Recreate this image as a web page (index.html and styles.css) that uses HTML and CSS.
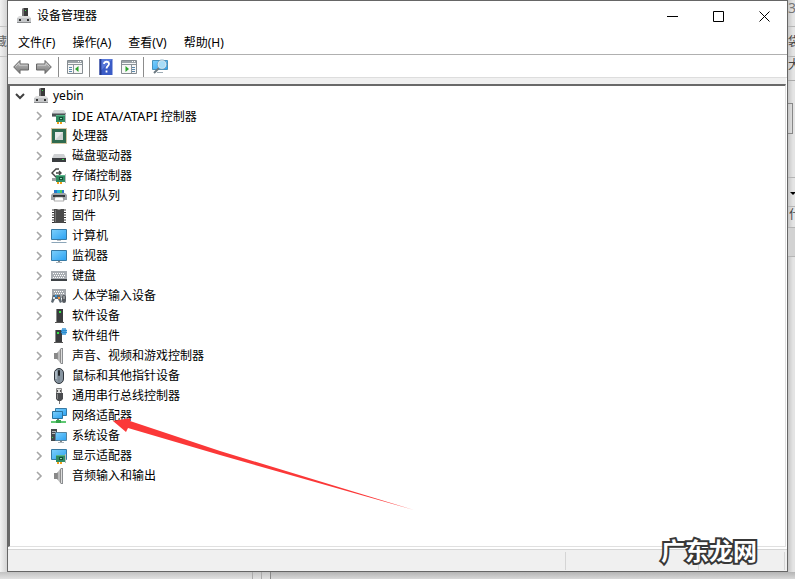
FILE: index.html
```html
<!DOCTYPE html>
<html lang="zh-CN">
<head>
<meta charset="utf-8">
<title>设备管理器</title>
<link rel="stylesheet" href="styles.css">
</head>
<body>
<svg class="defs" width="0" height="0" aria-hidden="true">
  <defs>
    <linearGradient id="screen" x1="0" y1="0" x2="1" y2="1"><stop offset="0" stop-color="#7dd0fb"/><stop offset="1" stop-color="#2ba1f2"/></linearGradient>
    <linearGradient id="arrow" x1="0" y1="0" x2="0" y2="1"><stop offset="0" stop-color="#c4c4c4"/><stop offset="1" stop-color="#777"/></linearGradient>
    <linearGradient id="cone" x1="0" y1="0" x2="1" y2="0"><stop offset="0" stop-color="#777"/><stop offset=".5" stop-color="#d0d0d0"/><stop offset="1" stop-color="#777"/></linearGradient>
  </defs>
  <symbol id="i-root" viewBox="0 0 16 16">
    <path d="M6 1l1-1h4v9H6z" fill="#777"/><path d="M8 0h4v9H8z" fill="#3a3a3a"/><path d="M9 2h1v1H9z" fill="#3bdc4a"/>
    <path d="M3 8h10l2 2H1z" fill="#ddd"/><path d="M1 10h14v5H1z" fill="#c4c6c8"/><path d="M1 14h14v1H1z" fill="#8c8e90"/><path d="M3 11h2v2H3zM11 11h2v2h-2z" fill="#333"/>
  </symbol>
  <symbol id="i-card" viewBox="0 0 16 16">
    <path d="M5 7h9v7H5z" fill="#2f8c62"/><path d="M5 7h9v1H5z" fill="#58b68a"/><path d="M14 6h1v9h-1z" fill="#b8bcc0"/><path d="M8 9h4v3H8z" fill="#164d38"/><path d="M9 10h2v1H9z" fill="#8ad8b0"/><path d="M6 14h2v2H6zM9 14h2v2H9z" fill="#f2a11c"/>
  </symbol>
  <symbol id="i-ide" viewBox="0 0 16 16">
    <path d="M3 2h10l2 3H1z" fill="#d4d7d9"/><path d="M1 5h14v4H1z" fill="#8f9599"/><path d="M1 6h14v2H1z" fill="#4c5154"/><use href="#i-card" width="16" height="16"/>
  </symbol>
  <symbol id="i-cpu" viewBox="0 0 16 16">
    <rect x=".5" y=".5" width="15" height="15" fill="none" stroke="#a68d45" stroke-dasharray="1 1"/><path d="M1 1h14v14H1z" fill="#2f6b4f"/><path d="M4 4h8v8H4z" fill="#cfd2d1"/><path d="M4 4h8L4 12z" fill="#e9e9e9"/>
  </symbol>
  <symbol id="i-disk" viewBox="0 0 16 16">
    <path d="M3 6h10l2 4H1z" fill="#cfd1d3"/><path d="M1 10h14v4H1z" fill="#3a3d40"/><path d="M11 11h2v1h-2z" fill="#35d74b"/>
  </symbol>
  <symbol id="i-storage" viewBox="0 0 16 16">
    <path d="M8 1H5L1 5l4 4h2M5 5h5M8 3l2 2-2 2" fill="none" stroke="#444" stroke-width="1.4"/><path d="M1 10h5v3H1z" fill="#9b9ea0"/><use href="#i-card" width="16" height="16"/>
  </symbol>
  <symbol id="i-printer" viewBox="0 0 16 16">
    <path d="M3 2h10v4H3z" fill="#2878cc"/><path d="M6 2h3v3H6z" fill="#22b9d2"/><path d="M9 2h2v3H9z" fill="#4bc653"/><path d="M2 5h12l2 2v5H0V7z" fill="#9fa4a8"/><path d="M2 7h12v2H2z" fill="#34383b"/><path d="M4 9h8l1 4H3z" fill="#fff" stroke="#777" stroke-width=".6"/>
  </symbol>
  <symbol id="i-chip" viewBox="0 0 16 16">
    <path d="M1 2h14M1 4.500h14M1 7h14M1 9.500h14M1 12h14M1 14.500h14" stroke="#333"/><path d="M3 1h3l1 1h2l1-1h3v14H3z" fill="#4a4a4a"/><path d="M4 2h1v12H4z" fill="#777"/>
  </symbol>
  <symbol id="i-computer" viewBox="0 0 16 16">
    <path d="M.5 1.500h15v10H.5z" fill="url(#screen)" stroke="#377aa5"/><path d="M6 12h4v1H6z" fill="#b6bec4"/><path d="M1 14h14l1 1H0z" fill="#8ca6b9"/>
  </symbol>
  <symbol id="i-monitor" viewBox="0 0 16 16">
    <path d="M.5 2.500h15v10H.5z" fill="url(#screen)" stroke="#377aa5"/><path d="M7 13h2v1H7z" fill="#888"/><path d="M5 14h6v1H5z" fill="#a8b4bc"/>
  </symbol>
  <symbol id="i-keyboard" viewBox="0 0 16 16">
    <path d="M0 3h16v9H0z" fill="#a9adb2"/><path d="M0 11h16v2H0z" fill="#3e4246"/><path d="M2 5.500h12M3 7.500h11M2 9.500h12" stroke="#fff" stroke-dasharray="1 1"/>
  </symbol>
  <symbol id="i-hid" viewBox="0 0 16 16">
    <path d="M1 1h14v9H1z" fill="#a4a8ad"/><path d="M3 3.500h10M4 5.500h10" stroke="#fff" stroke-dasharray="1 1"/><path d="M2 7h7l2 7-2 1-2-4H4l-2 4-2-1z" fill="#5c6770"/><path d="M2 9h2v2H2z" fill="#d5e5f2"/><path d="M4 7h2v2H4z" fill="#3594dc"/><path d="M7 9h2v2H7z" fill="#ee8f3e"/><rect x="11" y="7" width="4" height="8" rx="2" fill="#555a60"/><path d="M13 8v3" stroke="#ccc"/>
  </symbol>
  <symbol id="i-soft" viewBox="0 0 16 16">
    <path d="M5 1h7v13H5z" fill="#3a3c3e"/><path d="M5 1h1v13H5z" fill="#888"/><path d="M8 3h2v2H8z" fill="#35e445"/><path d="M4 14h9v1H4z" fill="#555"/>
  </symbol>
  <symbol id="i-component" viewBox="0 0 16 16">
    <path d="M4 2h7v12H4z" fill="#3a3c3e"/><path d="M4 2h1v12H4z" fill="#888"/><path d="M6 4h2v2H6z" fill="#35e445"/><path d="M3 14h9v1H3z" fill="#555"/><path d="M12 0v7M14 0v7M10 2.500h6M10 4.500h6" fill="none" stroke="#2a8ed2" stroke-width="1.400"/>
  </symbol>
  <symbol id="i-speaker" viewBox="0 0 16 16">
    <path d="M3 5h3v6H3z" fill="#888"/><path d="M6 5l4-5v16l-4-5z" fill="url(#cone)"/><path d="M10 0h2v16h-2z" fill="#8b8e91"/><path d="M10.500 1v14" stroke="#ddd"/>
  </symbol>
  <symbol id="i-mouse" viewBox="0 0 16 16">
    <rect x="3.500" y=".5" width="9" height="15" rx="4.500" fill="#8795a1" stroke="#30363c"/><path d="M5 3v8" stroke="#ced9e1"/><rect x="7" y="2" width="2" height="6" rx="1" fill="#22272b"/><path d="M8 8v6" stroke="#65717b" stroke-width=".6"/>
  </symbol>
  <symbol id="i-usb" viewBox="0 0 16 16">
    <path d="M5.500.5h5v5h-5z" fill="#ddd" stroke="#888"/><path d="M6 2h1v2H6zM9 2h1v2H9z" fill="#555"/><path d="M5 5h7v6l-2 2H7l-2-2z" fill="#4a4c4f"/><path d="M6 6h1v5H6z" fill="#888"/><path d="M8 13h1v3H8z" fill="#777"/>
  </symbol>
  <symbol id="i-network" viewBox="0 0 16 16">
    <path d="M4.500.5h11v7h-11z" fill="url(#screen)" stroke="#377aa5"/><path d="M1.500 3.500h10v7h-10z" fill="url(#screen)" stroke="#28729e"/><path d="M6 11h2v2H6z" fill="#777"/><path d="M0 13h15v2H0z" fill="#5fc873"/><path d="M5 12h5v3H5z" fill="#35a54a"/>
  </symbol>
  <symbol id="i-system" viewBox="0 0 16 16">
    <path d="M0 1h6v12H0z" fill="#45494c"/><path d="M1 3.500h4M1 5.500h4" stroke="#b4b8bb"/><path d="M1 9h1v1H1z" fill="#3de34d"/><path d="M4.500 4.500h11v8h-11z" fill="url(#screen)" stroke="#55839f"/><path d="M9 13h2v1H9z" fill="#888"/><path d="M7 14h6v1H7z" fill="#a7b2b9"/>
  </symbol>
  <symbol id="i-display" viewBox="0 0 16 16">
    <path d="M.5 1.500h15v10H.5z" fill="url(#screen)" stroke="#377aa5"/><use href="#i-card" width="16" height="16"/>
  </symbol>
  <symbol id="i-back" viewBox="0 0 16 14">
    <path d="M.7 7L7 .5v3.500h8.500v6H7v3.500z" fill="url(#arrow)" stroke="#666"/><path d="M2.500 6.500L6 3v2.200h8.500" fill="none" stroke="#d6d6d6" stroke-width=".8"/>
  </symbol>
  <symbol id="i-panel" viewBox="0 0 16 14">
    <path d="M.5.5h15v13H.5z" fill="#f7f7f7" stroke="#858c91"/><path d="M1 1h14v2H1z" fill="#9ba3a8"/><path d="M11 1h1v1h-1zM13 1h1v1h-1z" fill="#fff"/><path d="M1 4.500h14M6.500 5v8" stroke="#8c9499"/><path d="M2 7.500h3M2 9.500h3M2 11.500h3" stroke="#5a88ab"/><path d="M11.500 6v6L8 9z" fill="#2ba42b"/>
  </symbol>
  <symbol id="i-panel-right" viewBox="0 0 16 14">
    <path d="M.5.5h15v13H.5z" fill="#f7f7f7" stroke="#858c91"/><path d="M1 1h14v2H1z" fill="#9ba3a8"/><path d="M11 1h1v1h-1zM13 1h1v1h-1z" fill="#fff"/><path d="M1 4.500h14M10.500 5v8" stroke="#8c9499"/><path d="M11 7.500h3M11 9.500h3M11 11.500h3" stroke="#5a88ab"/><path d="M4.500 6v6L8 9z" fill="#2ba42b"/>
  </symbol>
  <symbol id="i-help" viewBox="0 0 13 16">
    <path d="M0 0h13v16H0z" fill="#3a5bc6"/><path d="M0 0h2v16H0z" fill="#24398c"/><path d="M2 0h11L2 11z" fill="#5878d9"/><path d="M4.500 5c0-3 5-3 5 0 0 2-2.500 2-2.500 4.500M7 11.500v2" fill="none" stroke="#fff" stroke-width="1.800"/>
  </symbol>
  <symbol id="i-scan" viewBox="0 0 16 16">
    <path d="M.5 1.500h15v9H.5z" fill="url(#screen)" stroke="#4792bd"/><path d="M5 13h6v1H5z" fill="#9dabb4"/><path d="M7 9l-5 5" stroke="#6c7981" stroke-width="2"/><circle cx="10" cy="5.500" r="4" fill="#a8ddf8" stroke="#dceaf2" stroke-width="1.200"/><circle cx="10" cy="5.500" r="4.700" fill="none" stroke="#6795b2" stroke-width=".6"/>
  </symbol>
</svg>

<div class="desktop">
  <div class="behind behind-left" aria-hidden="true"><span class="peek">收藏</span></div>

  <main class="window">
    <header class="titlebar">
      <svg class="icon"><use href="#i-root"/></svg>
      <h1>设备管理器</h1>
      <div class="controls">
        <button aria-label="最小化"><svg viewBox="0 0 11 11"><path d="M0 5.500h11"/></svg></button>
        <button aria-label="最大化"><svg viewBox="0 0 11 11"><path d="M.5.5h10v10H.5z"/></svg></button>
        <button aria-label="关闭"><svg viewBox="0 0 11 11"><path d="M.5.5l10 10M10.500.5l-10 10"/></svg></button>
      </div>
    </header>

    <nav class="menu">
      <button>文件(F)</button>
      <button>操作(A)</button>
      <button>查看(V)</button>
      <button>帮助(H)</button>
    </nav>

    <div class="toolbar" role="toolbar">
      <button aria-label="后退"><svg class="icon"><use href="#i-back"/></svg></button>
      <button aria-label="前进"><svg class="icon flip"><use href="#i-back"/></svg></button>
      <span class="rule"></span>
      <button aria-label="控制台树"><svg class="icon"><use href="#i-panel"/></svg></button>
      <span class="rule"></span>
      <button aria-label="帮助"><svg class="icon"><use href="#i-help"/></svg></button>
      <button aria-label="操作窗格"><svg class="icon"><use href="#i-panel-right"/></svg></button>
      <span class="rule"></span>
      <button aria-label="扫描检测硬件改动"><svg class="icon"><use href="#i-scan"/></svg></button>
    </div>

    <section class="pane">
      <button class="row root"><svg class="chevron open" viewBox="0 0 10 10"><path d="M1 3l4 4 4-4"/></svg><svg class="icon"><use href="#i-root"/></svg><span>yebin</span></button>
      <ul class="tree">
        <li><button class="row"><svg class="chevron" viewBox="0 0 10 10"><path d="M3 1l4 4-4 4"/></svg><svg class="icon"><use href="#i-ide"/></svg><span><span class="latin">IDE ATA/ATAPI</span> 控制器</span></button></li>
        <li><button class="row"><svg class="chevron" viewBox="0 0 10 10"><path d="M3 1l4 4-4 4"/></svg><svg class="icon"><use href="#i-cpu"/></svg><span>处理器</span></button></li>
        <li><button class="row"><svg class="chevron" viewBox="0 0 10 10"><path d="M3 1l4 4-4 4"/></svg><svg class="icon"><use href="#i-disk"/></svg><span>磁盘驱动器</span></button></li>
        <li><button class="row"><svg class="chevron" viewBox="0 0 10 10"><path d="M3 1l4 4-4 4"/></svg><svg class="icon"><use href="#i-storage"/></svg><span>存储控制器</span></button></li>
        <li><button class="row"><svg class="chevron" viewBox="0 0 10 10"><path d="M3 1l4 4-4 4"/></svg><svg class="icon"><use href="#i-printer"/></svg><span>打印队列</span></button></li>
        <li><button class="row"><svg class="chevron" viewBox="0 0 10 10"><path d="M3 1l4 4-4 4"/></svg><svg class="icon"><use href="#i-chip"/></svg><span>固件</span></button></li>
        <li><button class="row"><svg class="chevron" viewBox="0 0 10 10"><path d="M3 1l4 4-4 4"/></svg><svg class="icon"><use href="#i-computer"/></svg><span>计算机</span></button></li>
        <li><button class="row"><svg class="chevron" viewBox="0 0 10 10"><path d="M3 1l4 4-4 4"/></svg><svg class="icon"><use href="#i-monitor"/></svg><span>监视器</span></button></li>
        <li><button class="row"><svg class="chevron" viewBox="0 0 10 10"><path d="M3 1l4 4-4 4"/></svg><svg class="icon"><use href="#i-keyboard"/></svg><span>键盘</span></button></li>
        <li><button class="row"><svg class="chevron" viewBox="0 0 10 10"><path d="M3 1l4 4-4 4"/></svg><svg class="icon"><use href="#i-hid"/></svg><span>人体学输入设备</span></button></li>
        <li><button class="row"><svg class="chevron" viewBox="0 0 10 10"><path d="M3 1l4 4-4 4"/></svg><svg class="icon"><use href="#i-soft"/></svg><span>软件设备</span></button></li>
        <li><button class="row"><svg class="chevron" viewBox="0 0 10 10"><path d="M3 1l4 4-4 4"/></svg><svg class="icon"><use href="#i-component"/></svg><span>软件组件</span></button></li>
        <li><button class="row"><svg class="chevron" viewBox="0 0 10 10"><path d="M3 1l4 4-4 4"/></svg><svg class="icon"><use href="#i-speaker"/></svg><span>声音、视频和游戏控制器</span></button></li>
        <li><button class="row"><svg class="chevron" viewBox="0 0 10 10"><path d="M3 1l4 4-4 4"/></svg><svg class="icon"><use href="#i-mouse"/></svg><span>鼠标和其他指针设备</span></button></li>
        <li><button class="row"><svg class="chevron" viewBox="0 0 10 10"><path d="M3 1l4 4-4 4"/></svg><svg class="icon"><use href="#i-usb"/></svg><span>通用串行总线控制器</span></button></li>
        <li><button class="row"><svg class="chevron" viewBox="0 0 10 10"><path d="M3 1l4 4-4 4"/></svg><svg class="icon"><use href="#i-network"/></svg><span>网络适配器</span></button></li>
        <li><button class="row"><svg class="chevron" viewBox="0 0 10 10"><path d="M3 1l4 4-4 4"/></svg><svg class="icon"><use href="#i-system"/></svg><span>系统设备</span></button></li>
        <li><button class="row"><svg class="chevron" viewBox="0 0 10 10"><path d="M3 1l4 4-4 4"/></svg><svg class="icon"><use href="#i-display"/></svg><span>显示适配器</span></button></li>
        <li><button class="row"><svg class="chevron" viewBox="0 0 10 10"><path d="M3 1l4 4-4 4"/></svg><svg class="icon"><use href="#i-speaker"/></svg><span>音频输入和输出</span></button></li>
      </ul>
      <svg class="pointer" viewBox="0 0 300 90" aria-hidden="true"><path d="M0 0L18-3 17 0 107 30 301 89 107 34 15 7 13 11z"/></svg>
    </section>

    <footer class="status"><span></span><span></span><span></span></footer>
    <div class="watermark">广东龙网</div>
  </main>

  <div class="behind behind-right" aria-hidden="true">
    <span class="strip s1">3</span><span class="strip s2">袋</span><span class="strip s3">大</span><span class="strip s4"><i></i></span><span class="strip s5"><b></b></span><span class="strip s6">什</span><span class="strip s7"></span>
  </div>
  <div class="behind behind-bottom" aria-hidden="true"><i></i><i></i></div>
</div>
</body>
</html>
```
FILE: styles.css
```css
* { box-sizing: border-box; }

body {
  margin: 0;
  font: 12px/16px "Noto Sans", "Noto Sans CJK SC", sans-serif;
  color: #000;
}

button {
  margin: 0;
  padding: 0;
  border: 0;
  background: none;
  font: inherit;
  color: inherit;
}

svg { display: block; flex: none; overflow: visible; }
.defs { position: absolute; }
.icon { width: 16px; height: 16px; }

.desktop {
  display: grid;
  grid-template: minmax(0, 1fr) 7px / 7px minmax(0, 1fr) 7px;
  height: 100vh;
  overflow: hidden;
  background: #ececec;
}

/* Windows behind the front one */
.behind { overflow: hidden; }
.behind-left {
  padding-top: 26px;
  background: linear-gradient(90deg, #f2f2f2, #d4d4d4);
}
.peek {
  display: flex;
  justify-content: flex-end;
  height: 31px;
  padding-top: 7px;
  border: solid #c4c4c4;
  border-width: 1px 0;
  white-space: nowrap;
  color: #666;
}
.behind-right {
  display: flex;
  flex-direction: column;
  background: linear-gradient(90deg, #c6c6c6, #e4e4e4 5px);
}
.strip {
  flex: none;
  overflow: hidden;
  border-bottom: 1px solid #b5b5b5;
  color: #444;
}
.s1 { height: 27px; font-size: 14px; color: #777; }
.s2 { height: 30px; padding-top: 7px; }
.s3 { height: 24px; border-color: #aaa; }
.s4 { height: 97px; padding-top: 22px; }
.s4 i { display: block; width: 5px; height: 31px; border: 1px solid #888; border-left: 0; }
.s5 { height: 29px; padding: 14px 0 0 2px; }
.s5 b { display: block; width: 6px; border: 3px solid transparent; border-top-color: #000; }
.s6 { height: 21px; padding-left: 1px; }
.s7 { height: 29px; background: #d2d2d2; }
.behind-bottom {
  display: flex;
  grid-column: 1 / -1;
  gap: 8px;
  padding-left: 252px;
  background: linear-gradient(#c2c2c2, #e2e2e2);
}
.behind-bottom i { width: 1px; background: #aaa; }
.behind-bottom::after { content: ""; flex: 1; border-left: 1px solid #888; background: linear-gradient(#b4b4b4, #d8d8d8); }

/* Front window */
.window {
  position: relative;
  display: flex;
  flex-direction: column;
  min-width: 0;
  border: 1px solid #666;
  background: #fff;
}

.titlebar { display: flex; align-items: center; height: 30px; padding-left: 8px; gap: 5px; }
.titlebar h1 { flex: 1; margin: 0; font-size: 12px; font-weight: 400; }
.controls { display: flex; }
.controls button { display: grid; place-items: center; width: 46px; height: 30px; }
.controls svg { width: 11px; height: 11px; fill: none; stroke: #000; }

.menu { display: flex; gap: 1px; height: 24px; padding: 0 2px; border-bottom: 1px solid #b0b0b0; }
.menu button { padding: 0 8px; }

.toolbar { display: flex; align-items: center; height: 23px; padding: 2px 5px 0; border-bottom: 1px solid #ddd; }
.toolbar button { width: 23px; }
.toolbar .rule { width: 1px; height: 20px; margin: 0 8px 0 -1px; background: #8c8c8c; }
.flip { transform: scaleX(-1); }

.pane {
  position: relative;
  flex: 1;
  min-height: 0;
  margin: 6px 1px 0 0;
  border: solid;
  border-width: 2px 1px 1px 2px;
  border-color: #696969 #e0e0e0 #e0e0e0 #696969;
  background: #fff;
  box-shadow: 0 -6px #f0f0f0;
}
.row { display: flex; align-items: center; width: 100%; height: 20px; text-align: left; white-space: nowrap; }
.root { padding-left: 5px; gap: 5px; }
.root .icon { margin: 0 -1px 0 3px; }
.chevron { width: 10px; height: 10px; fill: none; stroke: #a6a6a6; stroke-width: 1.600; }
.chevron.open { stroke: #404040; stroke-width: 2; }
.tree { margin: 0; padding: 0; list-style: none; }
.tree .row { padding-left: 24px; gap: 5px; }
.tree .icon { margin-left: 2px; }
.latin { font-size: 13px; }

.pointer { position: absolute; left: 103px; top: 335px; width: 300px; height: 90px; fill: #fb3838; }

.status { display: flex; height: 22px; margin-top: 2px; border-top: 1px solid #d5d5d5; background: #f0f0f0; }
.status span { margin: 2px 0 1px; border-right: 1px solid #d5d5d5; }
.status span:nth-child(1) { flex: 559; }
.status span:nth-child(2) { flex: 133; }
.status span:nth-child(3) { flex: 85; margin-right: 2px; }

.watermark {
  position: absolute;
  right: 30px;
  bottom: 6px;
  font: 700 24px/30px "Noto Sans CJK SC", sans-serif;
  color: #fff;
  -webkit-text-stroke: 4px #383838;
  paint-order: stroke fill;
}
```
